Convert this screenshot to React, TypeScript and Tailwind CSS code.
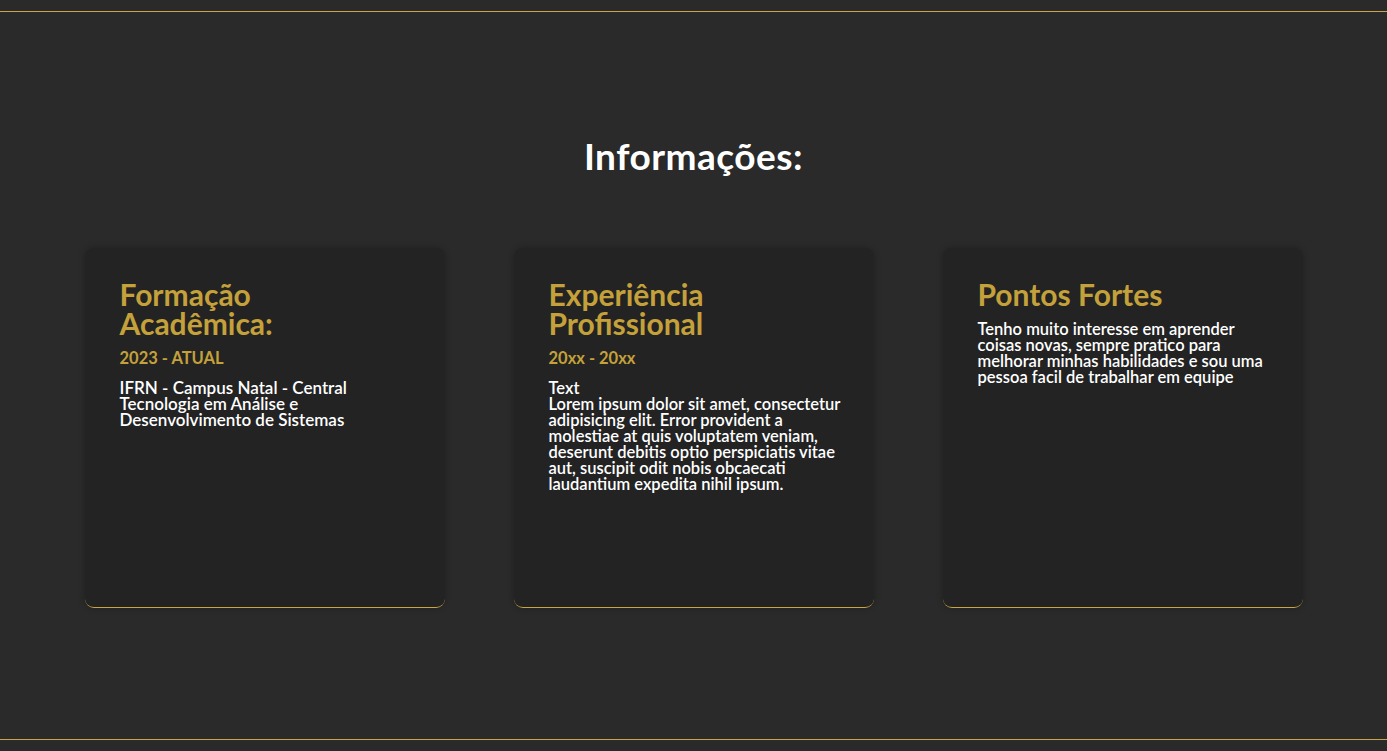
const CARDS = [
  {
    title: ["Formação", "Acadêmica:"],
    date: "2023 - ATUAL",
    body: "mt-[13px] text-[17px] leading-[16px] font-semibold text-white",
    lines: [
      "IFRN - Campus Natal - Central",
      "Tecnologia em Análise e",
      "Desenvolvimento de Sistemas",
    ],
  },
  {
    title: ["Experiência", "Profissional"],
    date: "20xx - 20xx",
    body: "mt-[13px] text-[16.5px] leading-[16px] font-semibold text-white",
    lines: [
      "Text",
      "Lorem ipsum dolor sit amet, consectetur",
      "adipisicing elit. Error provident a",
      "molestiae at quis voluptatem veniam,",
      "deserunt debitis optio perspiciatis vitae",
      "aut, suscipit odit nobis obcaecati",
      "laudantium expedita nihil ipsum.",
    ],
  },
  {
    title: ["Pontos Fortes"],
    date: "",
    body: "mt-[12px] text-[16.5px] leading-[16px] font-semibold text-white",
    lines: [
      "Tenho muito interesse em aprender",
      "coisas novas, sempre pratico para",
      "melhorar minhas habilidades e sou uma",
      "pessoa facil de trabalhar em equipe",
    ],
  },
];

export default function App() {
  return (
    <div className="min-h-[751px] bg-[#2a2a2a] font-['Lato',sans-serif] flex flex-col">
      <div className="mt-[11px] h-[1px] bg-[#c9a64c]" />

      <section className="flex-1 flex flex-col items-center">
        <h1 className="mt-[122px] text-[37px] leading-[44px] font-bold text-white tracking-[0.5px]">
          Informações:
        </h1>

        <div className="mt-[70px] flex gap-[69px]">
          {CARDS.map((card, index) => (
            <div
              key={index}
              className="w-[360px] h-[360px] bg-[#232323] rounded-[9px] border-b-[1.5px] border-[#c9a640] shadow-[0_0_6px_rgba(0,0,0,0.25)] pl-[35px] pr-[20px] pt-[32px]"
            >
              <h2 className="text-[30px] leading-[29px] font-bold text-[#c4a13a]">
                {card.title.map((t) => (
                  <div key={t}>{t}</div>
                ))}
              </h2>
              {card.date && (
                <p className="mt-[11px] text-[16.5px] leading-[18px] font-bold text-[#c4a13a]">
                  {card.date}
                </p>
              )}
              <p className={card.body}>
                {card.lines.map((l) => (
                  <span key={l} className="block whitespace-nowrap">
                    {l}
                  </span>
                ))}
              </p>
            </div>
          ))}
        </div>
      </section>

      <div className="mb-[11px] h-[1px] bg-[#c9a64c]" />
    </div>
  );
}
